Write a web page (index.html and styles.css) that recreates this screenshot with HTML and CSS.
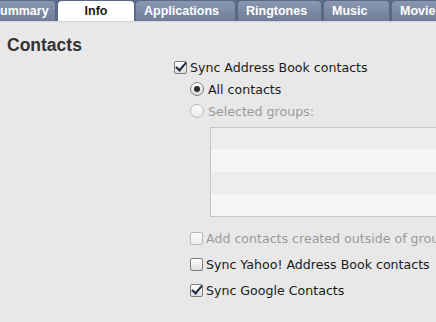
FILE: index.html
```html
<!DOCTYPE html>
<html lang="en">
<head>
    <meta charset="UTF-8">
    <title>Info</title>
    <link rel="stylesheet" href="styles.css">
</head>
<body>

<div class="tabs">
    <div class="tab first">ummary</div>
    <div class="tab active">Info</div>
    <div class="tab">Applications</div>
    <div class="tab">Ringtones</div>
    <div class="tab">Music</div>
    <div class="tab">Movies</div>
</div>

<div class="pane">
    <h2 class="title">Contacts</h2>

    <div class="options">
        <label class="row">
            <span class="box checked"></span>
            <span>Sync Address Book contacts</span>
        </label>

        <div class="sub">
            <label class="row">
                <span class="radio on"></span>
                <span>All contacts</span>
            </label>
            <label class="row disabled">
                <span class="radio"></span>
                <span>Selected groups:</span>
            </label>

            <div class="groups">
                <div class="group"></div>
                <div class="group"></div>
                <div class="group"></div>
                <div class="group"></div>
            </div>

            <div class="more">
                <label class="row disabled">
                    <span class="box"></span>
                    <span>Add contacts created outside of groups on this iPhone into:</span>
                </label>
                <label class="row">
                    <span class="box"></span>
                    <span>Sync Yahoo! Address Book contacts</span>
                </label>
                <label class="row">
                    <span class="box checked"></span>
                    <span>Sync Google Contacts</span>
                </label>
            </div>
        </div>
    </div>
</div>

</body>
</html>
```

FILE: styles.css
```css
* {
    box-sizing: border-box;
}
body {
    margin: 0;
    width: 436px;
    height: 322px;
    overflow: hidden;
    background-color: #e8e8e8;
    font-family: 'DejaVu Sans', sans-serif;
    color: #1a1a1a;
}
.tabs {
    display: flex;
    height: 22px;
    background-color: #5a6a86;
    border-bottom: 1px solid #d4d4d4;
    white-space: nowrap;
    overflow: hidden;
}
.tab {
    flex: none;
    height: 20px;
    margin-top: 1px;
    margin-right: 2px;
    padding: 0 8px;
    line-height: 21px;
    font-family: 'Liberation Sans', sans-serif;
    font-size: 12.5px;
    font-weight: bold;
    color: #ffffff;
    background: linear-gradient(#8997b0, #6f7e99);
    border-radius: 4px 4px 0 0;
    box-shadow: inset -1px 0 0 #5b6982;
}
.tab.first {
    width: 56px;
    padding: 0;
    border-radius: 0 4px 0 0;
}
.tab.active {
    width: 76px;
    text-align: center;
    color: #1a1a1a;
    background: #ffffff;
    box-shadow: none;
}
.tab:nth-child(3) { width: 100px; }
.tab:nth-child(4) { width: 84px; }
.tab:nth-child(5) { width: 66px; }
.tab:nth-child(6) { width: 60px; }

.pane {
    padding: 13px 0 0 7px;
}
.title {
    margin: 0;
    font-family: 'Liberation Sans', sans-serif;
    font-size: 17.5px;
    font-weight: bold;
    color: #333333;
    line-height: 20px;
}
.options {
    margin: 2px 0 0 167px;
}
.row {
    display: flex;
    align-items: center;
    gap: 3px;
    height: 21px;
    font-size: 12.6px;
    white-space: nowrap;
}
.sub {
    padding-left: 16px;
}
.sub .row {
    gap: 4px;
    height: 22px;
}
.more {
    margin-top: 8px;
}
.more .row {
    gap: 3px;
    height: 26px;
}
.disabled {
    color: #9a9a9a;
}
.box {
    flex: none;
    width: 13px;
    height: 13px;
    border: 1px solid #7f7f7f;
    border-radius: 2px;
    background: linear-gradient(#ffffff, #dcdcdc);
    position: relative;
}
.disabled .box {
    border-color: #b8b8b8;
    background: linear-gradient(#fafafa, #ececec);
}
.box.checked::after {
    content: "";
    position: absolute;
    left: 3px;
    top: -2px;
    width: 4px;
    height: 9px;
    border: solid #1e2b40;
    border-width: 0 2px 2px 0;
    transform: rotate(40deg);
}
.radio {
    flex: none;
    width: 14px;
    height: 14px;
    border: 1px solid #7f7f7f;
    border-radius: 50%;
    background: linear-gradient(#ffffff, #d8d8d8);
    position: relative;
}
.disabled .radio {
    border-color: #b8b8b8;
    background: linear-gradient(#fafafa, #ececec);
}
.radio.on::after {
    content: "";
    position: absolute;
    left: 3px;
    top: 3px;
    width: 6px;
    height: 6px;
    border-radius: 50%;
    background-color: #2a2a2a;
}
.groups {
    width: 240px;
    margin: 5px 0 0 20px;
    border: 1px solid #c6c6c6;
    border-right: none;
    background-color: #ededed;
}
.group {
    height: 22px;
}
.group:nth-child(even) {
    background-color: #f6f6f6;
}
```
